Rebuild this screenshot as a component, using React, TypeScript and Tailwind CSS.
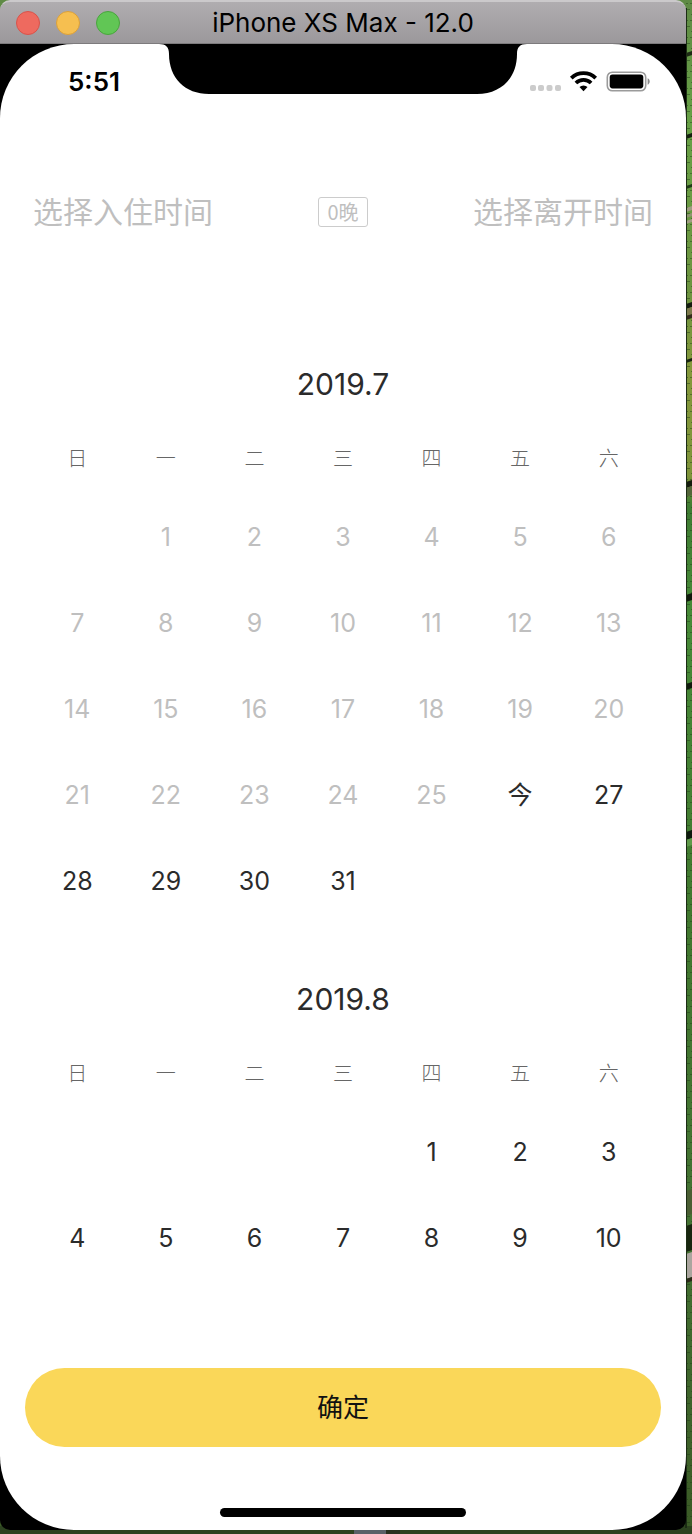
import React from "react";

const WEEKDAYS = ["日", "一", "二", "三", "四", "五", "六"];

type Month = {
  year: number;
  month: number;
  offset: number;
  days: number;
  disabledUntil: number;
  today?: number;
};

const MONTHS: Month[] = [
  { year: 2019, month: 7, offset: 1, days: 31, disabledUntil: 25, today: 26 },
  { year: 2019, month: 8, offset: 4, days: 10, disabledUntil: 0 },
];

function toWeeks({ offset, days }: Month): (number | null)[][] {
  const cells: (number | null)[] = [
    ...Array<null>(offset).fill(null),
    ...Array.from({ length: days }, (_, i) => i + 1),
  ];
  while (cells.length % 7 !== 0) cells.push(null);
  const weeks: (number | null)[][] = [];
  for (let i = 0; i < cells.length; i += 7) weeks.push(cells.slice(i, i + 7));
  return weeks;
}

const FIELD_LINES = [
  { y: 52, h: 4, c: "#1d2a14" },
  { y: 134, h: 4, c: "#14210f" },
  { y: 185, h: 3, c: "#1f3a17" },
  { y: 207, h: 4, c: "#a09c82" },
  { y: 214, h: 3, c: "#8f9472" },
  { y: 220, h: 3, c: "#a09c82" },
  { y: 303, h: 5, c: "#141c0e" },
  { y: 308, h: 7, c: "#7d7a4c" },
  { y: 315, h: 4, c: "#352c1c" },
  { y: 359, h: 3, c: "#17240f" },
  { y: 481, h: 6, c: "#141b0d" },
  { y: 487, h: 9, c: "#54653a" },
  { y: 594, h: 7, c: "#101a0c" },
  { y: 683, h: 6, c: "#101a0c" },
  { y: 831, h: 8, c: "#0e190d" },
  { y: 839, h: 7, c: "#5f9a4a" },
  { y: 1190, h: 25, c: "#4a5e33" },
  { y: 1225, h: 26, c: "#18260f" },
  { y: 1253, h: 25, c: "#aaa59e" },
  { y: 1278, h: 4, c: "#2b2a18" },
];

function Wallpaper() {
  return (
    <svg
      className="absolute inset-0 h-full w-full"
      viewBox="0 0 692 1534"
      preserveAspectRatio="none"
      aria-hidden="true"
    >
      <defs>
        <linearGradient id="fields" x1="0" y1="0" x2="0" y2="1">
          <stop offset="0" stopColor="#5f8a45" />
          <stop offset="0.08" stopColor="#67a046" />
          <stop offset="0.19" stopColor="#6d9440" />
          <stop offset="0.24" stopColor="#84983c" />
          <stop offset="0.31" stopColor="#7f943a" />
          <stop offset="0.33" stopColor="#3f7c33" />
          <stop offset="0.4" stopColor="#478a38" />
          <stop offset="0.6" stopColor="#41782f" />
          <stop offset="0.8" stopColor="#447233" />
          <stop offset="1" stopColor="#3b5a26" />
        </linearGradient>
        <pattern id="crops" width="6" height="17" patternUnits="userSpaceOnUse">
          <path d="M0 3h4v1H0zM2 9h4v1H2zM1 14h2v1H1z" fill="#1d3b14" opacity="0.45" />
        </pattern>
      </defs>
      <rect width="692" height="1534" fill="url(#fields)" />
      <rect x="686" width="6" height="1534" fill="url(#crops)" />
      {FIELD_LINES.map((l) => (
        <path key={l.y} d={`M686 ${l.y + 1}L692 ${l.y - 1}v${l.h}L686 ${l.y + l.h + 1}z`} fill={l.c} />
      ))}
      <rect y="1526" width="692" height="8" fill="#2d4320" />
      <rect x="354" y="1530" width="32" height="4" fill="#5a6168" />
      <rect x="386" y="1530" width="14" height="4" fill="#29301f" />
      <rect x="685" y="8" width="2" height="1520" fill="#1b2c14" />
    </svg>
  );
}

function TitleBar() {
  return (
    <header className="relative flex h-11 items-center justify-center rounded-t-[10px] border-t-2 border-b border-t-[#cbc9cb] border-b-[#7d7b7d] bg-linear-to-b from-[#b0adb0] to-[#9b989b]">
      <div className="absolute left-4 flex gap-4">
        <button aria-label="关闭" className="size-6 rounded-full border border-[#d8534b] bg-[#ee6a5f]" />
        <button aria-label="最小化" className="size-6 rounded-full border border-[#dba03a] bg-[#f6bf50]" />
        <button aria-label="缩放" className="size-6 rounded-full border border-[#49a53d] bg-[#61c655]" />
      </div>
      <h1 className="text-[26px] leading-none text-black">iPhone XS Max - 12.0</h1>
    </header>
  );
}

function StatusBar() {
  return (
    <div className="relative flex h-[76px] items-center justify-between pr-9 pl-[68px]">
      <svg
        className="absolute top-0 left-1/2 h-[51px] w-[368px] -translate-x-1/2"
        viewBox="0 0 368 51"
        aria-hidden="true"
      >
        <path
          d="M0 0C7 0 10 3 10 10C10 34 26 50 50 50H318C342 50 358 34 358 10C358 3 361 0 368 0Z"
          fill="#000"
        />
      </svg>
      <time className="text-[26px] leading-none font-semibold text-black">5:51</time>
      <svg className="h-6 w-[120px]" viewBox="0 0 120 24" aria-hidden="true">
        <g fill="#cccccc">
          <rect x="0" y="15" width="6" height="6" rx="2" />
          <rect x="8" y="15" width="6" height="6" rx="2" />
          <rect x="16.500" y="15" width="6" height="6" rx="2" />
          <rect x="25" y="15" width="6" height="6" rx="2" />
        </g>
        <g fill="none" stroke="#000" strokeWidth="3.800">
          <path d="M41.300 8.100A17.500 17.500 0 0 1 65.700 8.100" />
          <path d="M45.900 13A10.800 10.800 0 0 1 61.100 13" />
        </g>
        <path d="M49.500 17.100A5.600 5.600 0 0 1 57.500 17.100L53.500 21.200Z" fill="#000" />
        <rect x="77.300" y="2.200" width="38.400" height="18.600" rx="5" fill="none" stroke="#9b9b9b" strokeWidth="1.600" />
        <rect x="79.700" y="4.600" width="33.600" height="13.800" rx="2.800" fill="#000" />
        <path d="M117.600 8.300C120.400 9.500 120.400 13.500 117.600 14.700Z" fill="#8a8a8a" />
      </svg>
    </div>
  );
}

function StayRange() {
  return (
    <div className="grid grid-cols-[1fr_auto_1fr] items-center px-[33px] pt-[68px] text-[#bfbfbf]">
      <button className="justify-self-start text-[30px] leading-12">选择入住时间</button>
      <span className="flex h-[30px] w-[50px] items-center justify-center rounded-[3px] border border-[#cccccc] font-['Noto_Sans_CJK_SC',sans-serif] text-[20px] leading-none">
        0晚
      </span>
      <button className="justify-self-end text-[30px] leading-12">选择离开时间</button>
    </div>
  );
}

function MonthTable({ data }: { data: Month }) {
  return (
    <table className="w-full table-fixed border-collapse text-center">
      <caption className="h-20 text-[30px] leading-20 text-[#2b2b2b]">
        {data.year}.{data.month}
      </caption>
      <thead>
        <tr className="h-[70px]">
          {WEEKDAYS.map((d) => (
            <th key={d} scope="col" className="p-0 text-[20px] leading-none font-light text-[#666666]">
              {d}
            </th>
          ))}
        </tr>
      </thead>
      <tbody>
        {toWeeks(data).map((week, w) => (
          <tr key={w} className="h-[86px]">
            {week.map((day, i) => (
              <td key={i} className="p-0">
                {day !== null && (
                  <button
                    disabled={day <= data.disabledUntil}
                    className="h-[86px] w-full text-[25px] leading-none text-[#2b2b2b] disabled:text-[#bfbfbf]"
                  >
                    {day === data.today ? "今" : day}
                  </button>
                )}
              </td>
            ))}
          </tr>
        ))}
      </tbody>
    </table>
  );
}

export default function App() {
  return (
    <div className="relative min-h-screen bg-[#3b5a26] font-['Inter','Noto_Sans_CJK_SC',sans-serif]">
      <Wallpaper />
      <div className="relative flex min-h-screen flex-col pr-[6px] pb-[4px]">
        <TitleBar />
        <div className="flex grow flex-col rounded-b-[10px] bg-black">
          <main className="flex grow flex-col overflow-hidden rounded-[74px] bg-white">
            <StatusBar />
            <StayRange />
            <div className="flex grow flex-col gap-[35px] px-[33px] pt-[108px]">
              {MONTHS.map((m) => (
                <MonthTable key={m.month} data={m} />
              ))}
            </div>
            <footer className="flex flex-col items-center px-[25px] pb-[13px]">
              <button className="h-[79px] w-full rounded-full bg-[#fad759] text-[26px] leading-none text-[#111111]">
                确定
              </button>
              <div className="mt-[61px] h-[9px] w-[246px] rounded-full bg-black" />
            </footer>
          </main>
        </div>
      </div>
    </div>
  );
}
